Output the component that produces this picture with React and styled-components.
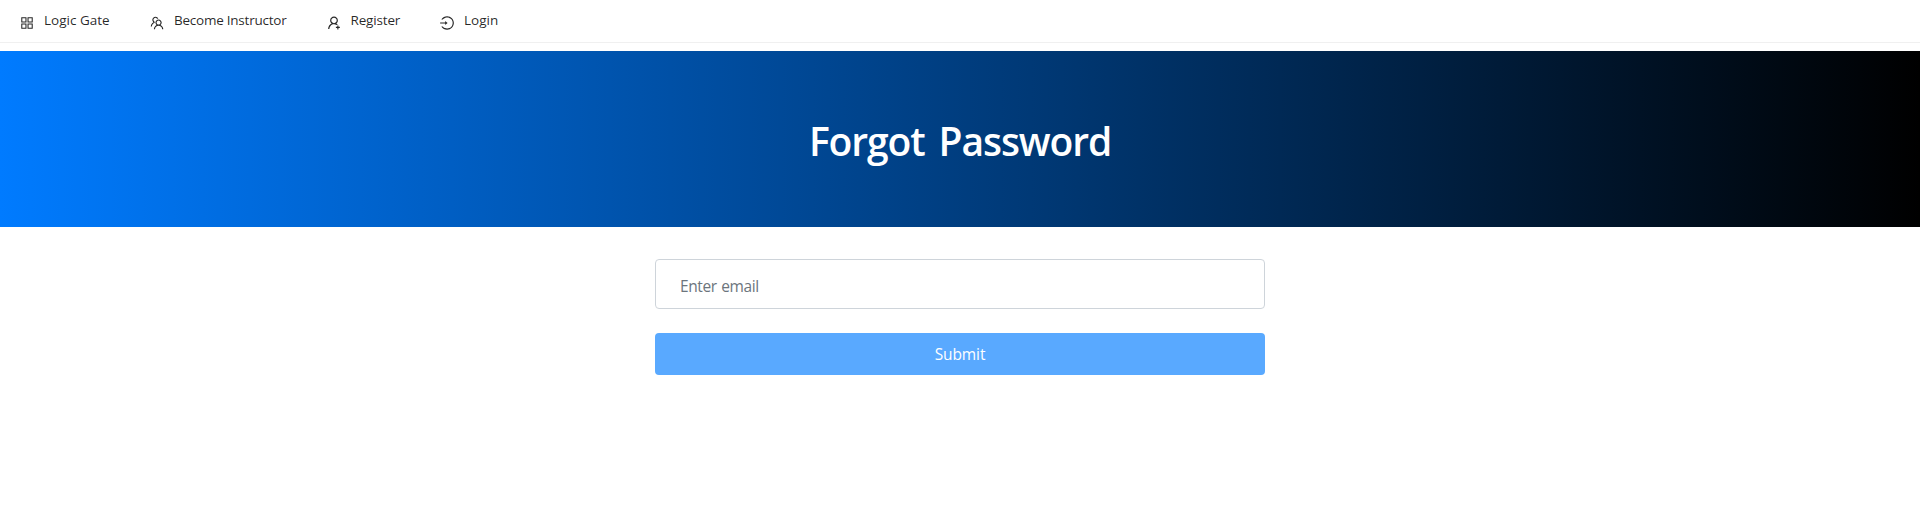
import React from "react";
import styled, { createGlobalStyle } from "styled-components";
import {
  AiOutlineAppstore,
  AiOutlineTeam,
  AiOutlineUserAdd,
  AiOutlineLogin,
} from "react-icons/ai";

const GlobalStyle = createGlobalStyle`
  *, *::before, *::after { box-sizing: border-box; }
  body {
    margin: 0;
    background: #fff;
    color: #212529;
    font-family: "Segoe UI", "Open Sans", "Noto Sans", sans-serif;
    font-size: 16px;
    line-height: 1.5;
  }
`;

const Menu = styled.nav`
  display: flex;
  height: 43px;
  margin-bottom: 8px;
  border-bottom: 1px solid #f0f0f0;
`;

const MenuItem = styled.a`
  display: flex;
  align-items: flex-start;
  gap: 10px;
  padding: 0 20px;
  color: rgba(0, 0, 0, 0.85);
  font-size: 13.5px;
  line-height: 40px;
  text-decoration: none;

  svg {
    flex: none;
    width: 16px;
    height: 16px;
    margin: 15px -1px 0;
  }
`;

const MenuLabel = styled.span`
  width: ${({ $width }) => $width}px;
  letter-spacing: ${({ $tracking }) => $tracking}px;
  white-space: nowrap;
`;

const Banner = styled.header`
  display: flex;
  align-items: center;
  justify-content: center;
  height: 176px;
  padding-top: 3px;
  background: linear-gradient(to right, #007bff, #000);
`;

const Title = styled.h1`
  margin: 0;
  color: #fff;
  font-size: 39px;
  font-weight: 600;
  line-height: 48px;
  letter-spacing: -1.1px;
  word-spacing: 5px;
`;

const Form = styled.form`
  display: flex;
  flex-direction: column;
  gap: 24px;
  width: 610px;
  margin: 32px auto 0;
`;

const EmailInput = styled.input`
  width: 100%;
  height: 50px;
  padding: 3px 24px 0;
  border: 1px solid #ced4da;
  border-radius: 4px;
  background: #fff;
  color: #495057;
  font: inherit;
  font-size: 15.5px;
  letter-spacing: -0.4px;
  word-spacing: 1px;

  &::placeholder {
    color: #6c757d;
    opacity: 1;
  }
`;

const SubmitButton = styled.button`
  height: 42px;
  padding: 2px 12px 0;
  border: 0;
  border-radius: 4px;
  background: #59a9ff;
  color: #fff;
  font: inherit;
  font-size: 15.5px;
  letter-spacing: -0.1px;
`;

const links = [
  { label: "Logic Gate", Icon: AiOutlineAppstore, width: 66, tracking: 0 },
  { label: "Become Instructor", Icon: AiOutlineTeam, width: 112.5, tracking: -0.24 },
  { label: "Register", Icon: AiOutlineUserAdd, width: 49.5, tracking: -0.17 },
  { label: "Login", Icon: AiOutlineLogin, width: 35, tracking: 0 },
];

export default function App() {
  return (
    <>
      <GlobalStyle />
      <Menu>
        {links.map(({ label, Icon, width, tracking }) => (
          <MenuItem key={label}>
            <Icon />
            <MenuLabel $width={width} $tracking={tracking}>{label}</MenuLabel>
          </MenuItem>
        ))}
      </Menu>
      <Banner>
        <Title>Forgot Password</Title>
      </Banner>
      <Form>
        <EmailInput type="email" placeholder="Enter email" />
        <SubmitButton type="button">Submit</SubmitButton>
      </Form>
    </>
  );
}
